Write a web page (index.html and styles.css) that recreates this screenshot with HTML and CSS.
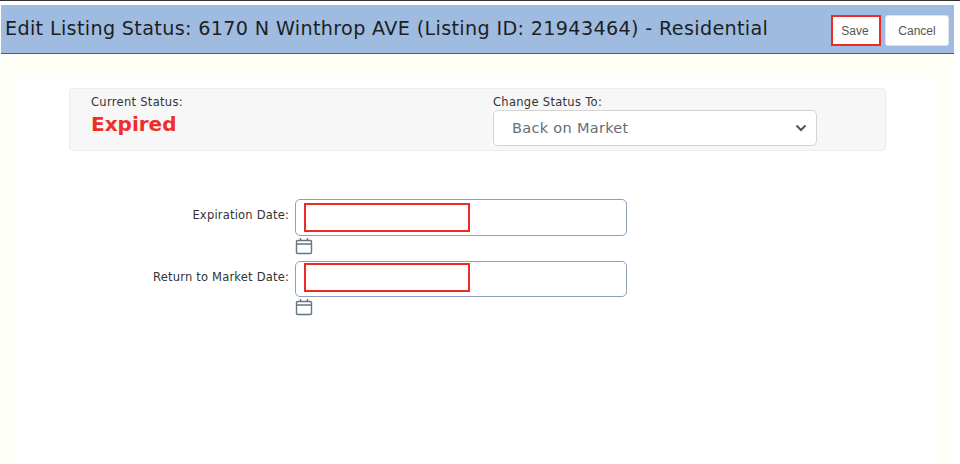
FILE: index.html
```html
<!DOCTYPE html>
<html lang="en">
<head>
    <meta charset="UTF-8">
    <meta name="viewport" content="width=device-width, initial-scale=1.0">
    <title>Edit Listing Status</title>
    <link rel="stylesheet" href="styles.css">
</head>
<body>
    <div class="top-line"></div>
    <div class="frame">
        <header class="header">
            <h1 class="title">Edit Listing Status: 6170 N Winthrop AVE (Listing ID: 21943464) - Residential</h1>
            <div class="actions">
                <button class="btn btn-save" type="button">Save</button>
                <button class="btn" type="button">Cancel</button>
            </div>
        </header>

        <main class="cream">
            <section class="content">
                <div class="status-box">
                    <div class="status-current">
                        <div class="status-label">Current Status:</div>
                        <div class="status-value">Expired</div>
                    </div>
                    <div class="status-change">
                        <label class="status-label" for="status">Change Status To:</label>
                        <div class="select">
                            <span>Back on Market</span>
                            <svg class="chevron" width="12" height="8" viewBox="0 0 12 8"><path d="M1.5 1.5 L6 6 L10.5 1.5" fill="none" stroke="#555" stroke-width="2"/></svg>
                        </div>
                    </div>
                </div>

                <form class="date-form">
                    <div class="date-row">
                        <label class="date-label" for="expiration">Expiration Date:</label>
                        <div class="date-field">
                            <div class="date-input">
                                <input class="date-required" id="expiration" type="text">
                            </div>
                            <svg class="calendar" width="18" height="18" viewBox="0 0 18 18"><path d="M2.5 3.5 H15.5 Q16.5 3.5 16.5 4.5 V15.5 Q16.5 16.5 15.5 16.5 H2.5 Q1.500 16.500 1.5 15.500 V4.500 Q1.500 3.500 2.5 3.500 Z M1.500 7 H16.500 M5.500 1 V4 M12.500 1 V4" fill="none" stroke="#66757f" stroke-width="1.400"/></svg>
                        </div>
                    </div>
                    <div class="date-row">
                        <label class="date-label" for="return-date">Return to Market Date:</label>
                        <div class="date-field">
                            <div class="date-input date-input-tight">
                                <input class="date-required" id="return-date" type="text">
                            </div>
                            <svg class="calendar" width="18" height="18" viewBox="0 0 18 18"><path d="M2.5 3.5 H15.5 Q16.5 3.5 16.5 4.5 V15.5 Q16.5 16.5 15.5 16.5 H2.5 Q1.500 16.500 1.5 15.500 V4.500 Q1.500 3.500 2.5 3.500 Z M1.500 7 H16.500 M5.500 1 V4 M12.500 1 V4" fill="none" stroke="#66757f" stroke-width="1.400"/></svg>
                        </div>
                    </div>
                </form>
            </section>
        </main>
    </div>
</body>
</html>
```
FILE: styles.css
```css
* {
    box-sizing: border-box;
}

html, body {
    height: 100%;
}

body {
    font-family: 'DejaVu Sans', sans-serif;
    margin: 0;
    padding: 0;
    background-color: #fff;
    color: #333;
    overflow: hidden;
    display: flex;
    flex-direction: column;
}

.top-line {
    height: 1px;
    background: #333;
    flex: none;
}

.frame {
    flex: 1;
    display: flex;
    flex-direction: column;
    margin: 4px 6px 0 1px;
    min-height: 0;
}

.header {
    height: 49px;
    flex: none;
    background: #9fbce0;
    border-bottom: 1px solid #3f5f8f;
    display: flex;
    justify-content: space-between;
    align-items: center;
    padding: 0 5px 0 4px;
}

.title {
    margin: 0 0 2px;
    font-size: 19.2px;
    letter-spacing: 0.33px;
    font-weight: normal;
    color: #1c1f24;
    white-space: nowrap;
}

.actions {
    display: flex;
    gap: 4px;
    margin-top: 3px;
}

.btn {
    width: 64px;
    height: 31px;
    padding: 0;
    background: #fff;
    border: 1px solid #dfe3e8;
    border-radius: 3px;
    font-family: 'Liberation Sans', sans-serif;
    font-size: 12px;
    color: #555;
}

.btn-save {
    width: 50px;
    padding-right: 2px;
    border: 2px solid #ee2a24;
    border-radius: 0;
}

.cream {
    flex: 1;
    background: #fffff8;
    padding: 21px 14px 0;
    min-height: 0;
}

.content {
    height: 100%;
    background: #fff;
    padding-top: 13px;
}

.status-box {
    margin-left: 54px;
    width: 817px;
    height: 63px;
    background: #f7f7f7;
    border: 1px solid #ececec;
    border-radius: 4px;
    display: flex;
    padding: 7px 0 0 21px;
}

.status-current {
    width: 402px;
}

.status-label {
    display: block;
    font-size: 11.5px;
    letter-spacing: 0.3px;
    line-height: 13px;
    color: #333;
}

.status-value {
    font-size: 20px;
    font-weight: bold;
    line-height: 30px;
    color: #ee2f27;
}

.select {
    margin-top: 1px;
    width: 324px;
    height: 36px;
    background: #fff;
    border: 1px solid #d4d4d4;
    border-radius: 5px;
    display: flex;
    align-items: center;
    justify-content: space-between;
    padding: 0 9px 0 18px;
    font-size: 14.5px;
    letter-spacing: 0.3px;
    color: #666e78;
}

.date-form {
    margin-top: 48px;
    display: flex;
    flex-direction: column;
    gap: 6px;
}

.date-row {
    display: flex;
    align-items: flex-start;
}

.date-label {
    width: 274px;
    margin-right: 6px;
    padding-top: 10px;
    text-align: right;
    font-size: 11.5px;
    letter-spacing: 0.2px;
    line-height: 13px;
    color: #333;
}

.date-input {
    width: 332px;
    height: 37px;
    border: 1px solid #8f9fb8;
    border-radius: 5px;
    padding: 3px 0 0 8px;
    background: #fff;
}

.date-input-tight {
    height: 36px;
    padding-top: 1px;
}

.date-required {
    display: block;
    width: 166px;
    height: 29px;
    border: 2px solid #ee2a24;
    padding: 0;
    outline: none;
}

.calendar {
    display: block;
    margin-top: 1px;
}
```
